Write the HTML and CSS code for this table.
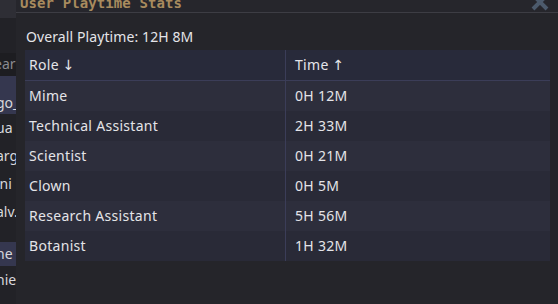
FILE: index.html
```html
<!DOCTYPE html>
<html>
<head>
<meta charset="utf-8">
<link rel="stylesheet" href="styles.css">
</head>
<body>
<div class="behind">
  <div class="b-head"></div>
  <div class="b-gap"></div>
  <div class="b-search">ear</div>
  <div class="b-sel"></div>
  <div class="b-item sel">go_</div>
  <div class="b-item">ua</div>
  <div class="b-item">arg</div>
  <div class="b-item">ini</div>
  <div class="b-item">alv.</div>
  <div class="b-gap2"></div>
  <div class="b-item sel2">ne</div>
  <div class="b-item">nie</div>
</div>
<div class="window">
  <div class="titlebar">
    <span class="title">User Playtime Stats</span>
    <svg class="close" width="18" height="18" viewBox="0 0 18 18"><path d="M2 2 L16 16 M16 2 L2 16" stroke="#4c5a6c" stroke-width="4"/></svg>
  </div>
  <div class="body">
    <div class="overall">Overall Playtime: 12H 8M</div>
    <div class="table">
      <div class="row head"><div class="c1">Role ↓</div><div class="c2">Time ↑</div></div>
      <div class="row odd"><div class="c1">Mime</div><div class="c2">0H 12M</div></div>
      <div class="row even"><div class="c1">Technical Assistant</div><div class="c2">2H 33M</div></div>
      <div class="row odd"><div class="c1">Scientist</div><div class="c2">0H 21M</div></div>
      <div class="row even"><div class="c1">Clown</div><div class="c2">0H 5M</div></div>
      <div class="row odd"><div class="c1">Research Assistant</div><div class="c2">5H 56M</div></div>
      <div class="row even"><div class="c1">Botanist</div><div class="c2">1H 32M</div></div>
    </div>
  </div>
</div>
</body>
</html>
```
FILE: styles.css
```css
html, body {
  margin: 0;
  padding: 0;
  background: #25252a;
  width: 558px;
  height: 304px;
  overflow: hidden;
}
body {
  display: flex;
  font-family: "Noto Sans", "DejaVu Sans", sans-serif;
  font-size: 14px;
  color: #e4e4e8;
}
.behind {
  width: 16px;
  flex: none;
  background: #222227;
  display: flex;
  flex-direction: column;
  overflow: hidden;
  white-space: nowrap;
  color: #d8d8dc;
}
.b-head { height: 18px; background: #2e2e35; }
.b-gap { height: 35px; }
.b-search { height: 23px; line-height: 21px; background: #1d1d21; color: #8a8a90; text-indent: -6px; }
.b-sel { height: 18px; background: #35374f; }
.b-item { height: 28px; line-height: 28px; text-indent: -4px; }
.b-item.sel { background: #35374f; height: 20px; line-height: 18px; }
.b-gap2 { height: 16px; }
.b-item.sel2 { background: #35374f; height: 24px; line-height: 24px; }
.window {
  flex: 1;
  background: #25252a;
  display: flex;
  flex-direction: column;
}
.titlebar {
  height: 12px;
  border-bottom: 1px solid #3d3d44;
  background: #26262c;
  display: flex;
  justify-content: space-between;
  overflow: hidden;
  padding: 0 9px 0 4px;
}
.title {
  font-family: "DejaVu Sans Mono", monospace;
  font-weight: bold;
  font-size: 14px;
  line-height: 14px;
  margin-top: -4px;
  color: #a88b5e;
  letter-spacing: 0.1px;
}
.close {
  margin-top: -7px;
  flex: none;
}
.body {
  padding: 14px 8px 0 9px;
  display: flex;
  flex-direction: column;
}
.overall {
  height: 23px;
  line-height: 19px;
  padding-left: 1px;
  letter-spacing: 0.1px;
}
.table {
  display: flex;
  flex-direction: column;
  letter-spacing: 0.3px;
}
.row {
  display: grid;
  grid-template-columns: 261px 1fr;
  height: 30px;
  line-height: 30px;
}
.c1 {
  padding-left: 4px;
  border-right: 1px solid #3b3d58;
}
.c2 { padding-left: 9px; }
.head { background: #282a3a; border-bottom: 1px solid #3b3d58; height: 30px; }
.odd { background: #2d2e3c; }
.even { background: #292a37; }
```
